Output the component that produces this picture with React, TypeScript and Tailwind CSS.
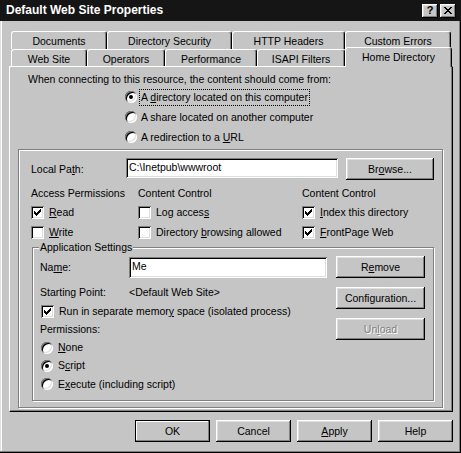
import type { ReactNode } from 'react'

// classic 3D bevels
const RAISED =
  'shadow-[inset_-1px_-1px_#000,inset_1px_1px_#fff,inset_-2px_-2px_#808080,inset_2px_2px_#dfdfdf]'
const SUNKEN =
  'shadow-[inset_1px_1px_#808080,inset_-1px_-1px_#fff,inset_2px_2px_#000,inset_-2px_-2px_#dfdfdf]'

function Button({
  children,
  className = '',
  isDefault = false,
  disabled = false,
}: {
  children: ReactNode
  className?: string
  isDefault?: boolean
  disabled?: boolean
}) {
  return (
    <div
      className={`flex shrink-0 items-center justify-center bg-[#c5c5c5] ${
        isDefault
          ? 'border border-black shadow-[inset_-1px_-1px_#808080,inset_1px_1px_#fff]'
          : RAISED
      } ${disabled ? 'text-[#808080] [text-shadow:1px_1px_0_#fff]' : ''} ${className}`}
    >
      <span>{children}</span>
    </div>
  )
}

function CheckBox({ checked, children }: { checked?: boolean; children: ReactNode }) {
  return (
    <div className="flex items-center gap-[5px]">
      <div className={`h-[13px] w-[13px] shrink-0 bg-white ${SUNKEN}`}>
        {checked ? (
          <svg width="13" height="13" viewBox="0 0 13 13" shapeRendering="crispEdges">
            <rect x="3" y="5" width="1" height="3" fill="#000" />
            <rect x="4" y="6" width="1" height="3" fill="#000" />
            <rect x="5" y="7" width="1" height="3" fill="#000" />
            <rect x="6" y="6" width="1" height="3" fill="#000" />
            <rect x="7" y="5" width="1" height="3" fill="#000" />
            <rect x="8" y="4" width="1" height="3" fill="#000" />
            <rect x="9" y="3" width="1" height="3" fill="#000" />
          </svg>
        ) : null}
      </div>
      <span>{children}</span>
    </div>
  )
}

function Radio({ checked, children }: { checked?: boolean; children: ReactNode }) {
  return (
    <div className="flex items-center gap-[4px]">
      <div
        className={`flex h-[12px] w-[12px] shrink-0 items-center justify-center rounded-full bg-white ${SUNKEN}`}
      >
        {checked ? <div className="h-[4px] w-[4px] rounded-full bg-black" /> : null}
      </div>
      {children}
    </div>
  )
}

function Tab({ children, className = '' }: { children: ReactNode; className?: string }) {
  return (
    <div
      className={`flex shrink-0 items-center justify-center rounded-t-[3px] border-l border-t border-r border-white border-r-black pt-[2px] shadow-[inset_-1px_0_#808080] ${className}`}
    >
      {children}
    </div>
  )
}

export default function App() {
  return (
    <div className="flex h-[453px] w-[461px] flex-col overflow-hidden bg-[#c5c5c5] font-['Liberation_Sans',Arial,sans-serif] text-[10.5px] leading-[13px] text-black shadow-[inset_-1px_-1px_#000,inset_-2px_-2px_#808080,inset_1px_0_#dfdfdf,inset_2px_0_#fff]">
      {/* Title bar */}
      <div className="flex h-[21px] shrink-0 items-center bg-[#151515] pl-[6px] pr-[5px]">
        <span className="flex-1 text-[12px] font-bold text-white">Default Web Site Properties</span>
        <div className="flex gap-[2px]">
          <div className={`flex h-[14px] w-[16px] items-center justify-center bg-[#c5c5c5] ${RAISED}`}>
            <span className="text-[11px] font-bold leading-none">?</span>
          </div>
          <div className={`flex h-[14px] w-[16px] items-center justify-center bg-[#c5c5c5] ${RAISED}`}>
            <svg width="8" height="7" viewBox="0 0 8 7" shapeRendering="crispEdges">
              <path d="M0 0h2v1H0zM6 0h2v1H6zM1 1h2v1H1zM5 1h2v1H5zM2 2h4v1H2zM3 3h2v1H3zM2 4h4v1H2zM1 5h2v1H1zM5 5h2v1H5zM0 6h2v1H0zM6 6h2v1H6z" fill="#000" />
            </svg>
          </div>
        </div>
      </div>

      {/* Tabs, back row */}
      <div className="ml-[11px] mt-[10px] flex h-[18px] shrink-0">
        <Tab className="w-[96px]">Documents</Tab>
        <Tab className="w-[125px]">Directory Security</Tab>
        <Tab className="w-[113px]">HTTP Headers</Tab>
        <Tab className="w-[106px]">Custom Errors</Tab>
      </div>
      {/* Tabs, front row */}
      <div className="ml-[11px] flex h-[17px] shrink-0 items-start">
        <Tab className="h-[17px] w-[76px]">Web Site</Tab>
        <Tab className="h-[17px] w-[78px]">Operators</Tab>
        <Tab className="h-[17px] w-[92px]">Performance</Tab>
        <Tab className="h-[17px] w-[88px]">ISAPI Filters</Tab>
        <div className="relative z-10 -mt-[2px] flex h-[20px] w-[107px] shrink-0 items-center justify-center rounded-t-[3px] border-l border-t border-r border-white border-r-black bg-[#c5c5c5] shadow-[inset_-1px_0_#808080]">
          Home Directory
        </div>
      </div>

      {/* Tab page */}
      <div className="ml-[9px] flex h-[346px] w-[444px] shrink-0 flex-col border border-white border-r-black border-b-black pt-[6px] shadow-[inset_-1px_-1px_#808080]">
        <div className="h-[13px] pl-[18px]">
          When connecting to this resource, the content should come from:
        </div>
        <div className="mt-[1px] flex flex-col pl-[115px]">
          <div className="flex h-[20px] items-center">
            <Radio checked>
              <span className="-ml-[2px] border border-dotted border-black px-[1px] leading-[15px]">
                A <u>d</u>irectory located on this computer
              </span>
            </Radio>
          </div>
          <div className="flex h-[20px] items-center">
            <Radio>
              <span>A share located on another computer</span>
            </Radio>
          </div>
          <div className="flex h-[20px] items-center">
            <Radio>
              <span>
                A redirection to a <u>U</u>RL
              </span>
            </Radio>
          </div>
        </div>

        {/* Local path group */}
        <div className="ml-[8px] mt-[2px] flex h-[259px] w-[425px] flex-col border border-[#808080] pl-[12px] pr-[7px] pt-[8px] shadow-[1px_1px_0_#fff,inset_1px_1px_0_#fff]">
          <div className="flex h-[22px] items-start">
            <div className="flex h-[22px] w-[95px] items-center">
              <span>
                Local Pa<u>t</u>h:
              </span>
            </div>
            <div className={`h-[20px] w-[212px] bg-white pl-[3px] pt-[3px] ${SUNKEN}`}>
              C:\Inetpub\wwwroot
            </div>
            <Button className="ml-[8px] h-[22px] w-[88px]">
              Br<u>o</u>wse...
            </Button>
          </div>

          <div className="mt-[7px] grid h-[13px] grid-cols-[107px_164px_1fr] items-center">
            <span>Access Permissions</span>
            <span>Content Control</span>
            <span>Content Control</span>
          </div>
          <div className="mt-[2px] grid h-[20px] grid-cols-[107px_164px_1fr] items-center">
            <CheckBox checked>
              <u>R</u>ead
            </CheckBox>
            <CheckBox>
              Log acces<u>s</u>
            </CheckBox>
            <CheckBox checked>
              <u>I</u>ndex this directory
            </CheckBox>
          </div>
          <div className="grid h-[21px] grid-cols-[107px_164px_1fr] items-center">
            <CheckBox>
              <u>W</u>rite
            </CheckBox>
            <CheckBox>
              Directory <u>b</u>rowsing allowed
            </CheckBox>
            <CheckBox checked>
              <u>F</u>rontPage Web
            </CheckBox>
          </div>

          {/* Application settings group */}
          <div className="relative ml-[1px] mt-[4px] flex h-[154px] w-[402px] justify-between border border-[#808080] pl-[7px] pr-[8px] pt-[8px] shadow-[1px_1px_0_#fff,inset_1px_1px_0_#fff]">
            <span className="absolute -top-[7px] left-[6px] bg-[#c5c5c5] px-[1px] leading-[13px]">
              Application Settings
            </span>
            <div className="flex flex-col">
              <div className="flex h-[22px] items-center">
                <span className="w-[89px]">
                  Na<u>m</u>e:
                </span>
                <div className={`h-[21px] w-[198px] bg-white pl-[3px] pt-[3px] ${SUNKEN}`}>Me</div>
              </div>
              <div className="mt-[4px] flex h-[20px] items-center">
                <span className="w-[89px]">Starting Point:</span>
                <span>&lt;Default Web Site&gt;</span>
              </div>
              <div className="flex h-[18px] items-center pl-[1px]">
                <CheckBox checked>
                  Run in separate memor<u>y</u> space (isolated process)
                </CheckBox>
              </div>
              <div className="flex h-[19px] items-center">Permissions:</div>
              <div className="flex h-[17px] items-center pl-[1px]">
                <Radio>
                  <span className="ml-[1px]">
                    <u>N</u>one
                  </span>
                </Radio>
              </div>
              <div className="flex h-[19px] items-center pl-[1px]">
                <Radio checked>
                  <span className="ml-[1px]">
                    S<u>c</u>ript
                  </span>
                </Radio>
              </div>
              <div className="flex h-[18px] items-center pl-[1px]">
                <Radio>
                  <span className="ml-[1px]">
                    E<u>x</u>ecute (including script)
                  </span>
                </Radio>
              </div>
            </div>
            <div className="flex flex-col gap-[9px]">
              <Button className="h-[22px] w-[89px]">
                R<u>e</u>move
              </Button>
              <Button className="h-[22px] w-[89px]">Configuration...</Button>
              <Button className="h-[22px] w-[89px]" disabled>
                Un<u>l</u>oad
              </Button>
            </div>
          </div>
        </div>
      </div>

      {/* Dialog buttons */}
      <div className="mt-[8px] flex w-[453px] shrink-0 justify-end gap-[6px]">
        <Button className="h-[22px] w-[75px]" isDefault>
          OK
        </Button>
        <Button className="h-[22px] w-[75px]">Cancel</Button>
        <Button className="h-[22px] w-[75px]">
          <u>A</u>pply
        </Button>
        <Button className="h-[22px] w-[75px]">Help</Button>
      </div>
    </div>
  )
}
